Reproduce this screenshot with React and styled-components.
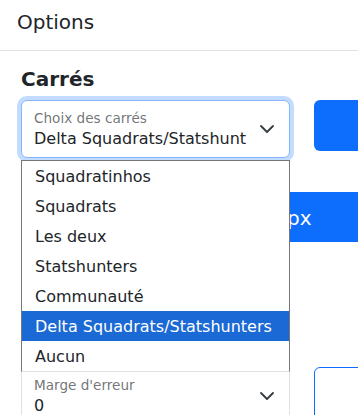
import React from "react";
import styled, { createGlobalStyle } from "styled-components";

const GlobalStyle = createGlobalStyle`
  html, body {
    margin: 0;
    overflow: hidden;
    background: #fff;
  }
  body {
    font-family: "DejaVu Sans", "Liberation Sans", sans-serif;
    font-size: 16px;
    color: #212529;
  }
`;

const options = [
  "Squadratinhos",
  "Squadrats",
  "Les deux",
  "Statshunters",
  "Communauté",
  "Delta Squadrats/Statshunters",
  "Aucun",
];

const Chevron = () => (
  <ChevronIcon viewBox="0 0 16 16" width="16" height="16">
    <path
      d="M2 5l6 6 6-6"
      fill="none"
      stroke="#343a40"
      strokeWidth="1.8"
      strokeLinecap="round"
      strokeLinejoin="round"
    />
  </ChevronIcon>
);

export default function App() {
  return (
    <Modal>
      <GlobalStyle />
      <Header>
        <Title>Options</Title>
      </Header>
      <Body>
        <SectionTitle>Carrés</SectionTitle>

        <Row>
          <SelectWrap>
            <FloatingSelect focused>
              <SelectLabel>Choix des carrés</SelectLabel>
              <SelectValue>Delta Squadrats/Statshunt</SelectValue>
              <Chevron />
            </FloatingSelect>
            <OptionList>
              {options.map((o) => (
                <OptionItem key={o} selected={o === "Delta Squadrats/Statshunters"}>
                  {o}
                </OptionItem>
              ))}
            </OptionList>
          </SelectWrap>
          <PrimaryButton />
        </Row>

        <SizeBar>
          <span>px</span>
        </SizeBar>

        <Row spaced>
          <FloatingSelect>
            <SelectLabel>Marge d'erreur</SelectLabel>
            <SelectValue>0</SelectValue>
            <Chevron />
          </FloatingSelect>
          <OutlineBox />
        </Row>
      </Body>
    </Modal>
  );
}

const Modal = styled.div`
  width: 358px;
  height: 415px;
  overflow: hidden;
  background: #fff;
`;

const Header = styled.div`
  height: 51px;
  padding: 7px 17px 0;
  box-sizing: border-box;
  border-bottom: 1px solid #dee2e6;
`;

const Title = styled.h5`
  margin: 0;
  font-size: 20px;
  font-weight: 400;
  line-height: 30px;
`;

const Body = styled.div`
  padding: 16px 0 0 21px;
`;

const SectionTitle = styled.h5`
  margin: 0 0 9px;
  font-size: 20px;
  font-weight: 700;
  line-height: 24px;
`;

const Row = styled.div`
  display: grid;
  grid-template-columns: 269px 120px;
  column-gap: 24px;
  align-items: start;
  margin-top: ${(p) => (p.spaced ? "125px" : "0")};
`;

const SelectWrap = styled.div`
  position: relative;
`;

const FloatingSelect = styled.div`
  position: relative;
  height: 58px;
  box-sizing: border-box;
  padding: 9px 36px 0 12px;
  display: flex;
  flex-direction: column;
  background: #fff;
  border: 1px solid ${(p) => (p.focused ? "#86b7fe" : "#dee2e6")};
  border-radius: 6px;
  box-shadow: ${(p) => (p.focused ? "0 0 0 4px rgba(13, 110, 253, 0.25)" : "none")};
`;

const SelectLabel = styled.span`
  font-size: 13.6px;
  line-height: 17px;
  color: rgba(33, 37, 41, 0.65);
  white-space: nowrap;
`;

const SelectValue = styled.span`
  font-size: 16px;
  line-height: 24px;
  white-space: nowrap;
  overflow: hidden;
`;

const ChevronIcon = styled.svg`
  position: absolute;
  right: 14px;
  top: 20px;
`;

const OptionList = styled.ul`
  position: absolute;
  z-index: 5;
  top: 60px;
  left: 0;
  width: 269px;
  margin: 0;
  padding: 0;
  list-style: none;
  box-sizing: border-box;
  background: #fff;
  border: 1px solid #767676;
  border-bottom-color: #dee2e6;
`;

const OptionItem = styled.li`
  height: 30px;
  box-sizing: border-box;
  padding: 2px 13px 0;
  line-height: 28px;
  font-size: 16px;
  white-space: nowrap;
  background: ${(p) => (p.selected ? "#1a69d4" : "#fff")};
  color: ${(p) => (p.selected ? "#fff" : "#212529")};
`;

const PrimaryButton = styled.div`
  height: 51px;
  background: #0d6efd;
  border-radius: 6px;
`;

const SizeBar = styled.div`
  margin-top: 34px;
  height: 50px;
  width: 400px;
  box-sizing: border-box;
  padding: 2px 0 0 266px;
  display: flex;
  align-items: center;
  background: #0d6efd;
  color: #fff;
  font-size: 20px;
`;

const OutlineBox = styled.div`
  height: 60px;
  border: 1px solid #0d6efd;
  border-radius: 6px;
`;
